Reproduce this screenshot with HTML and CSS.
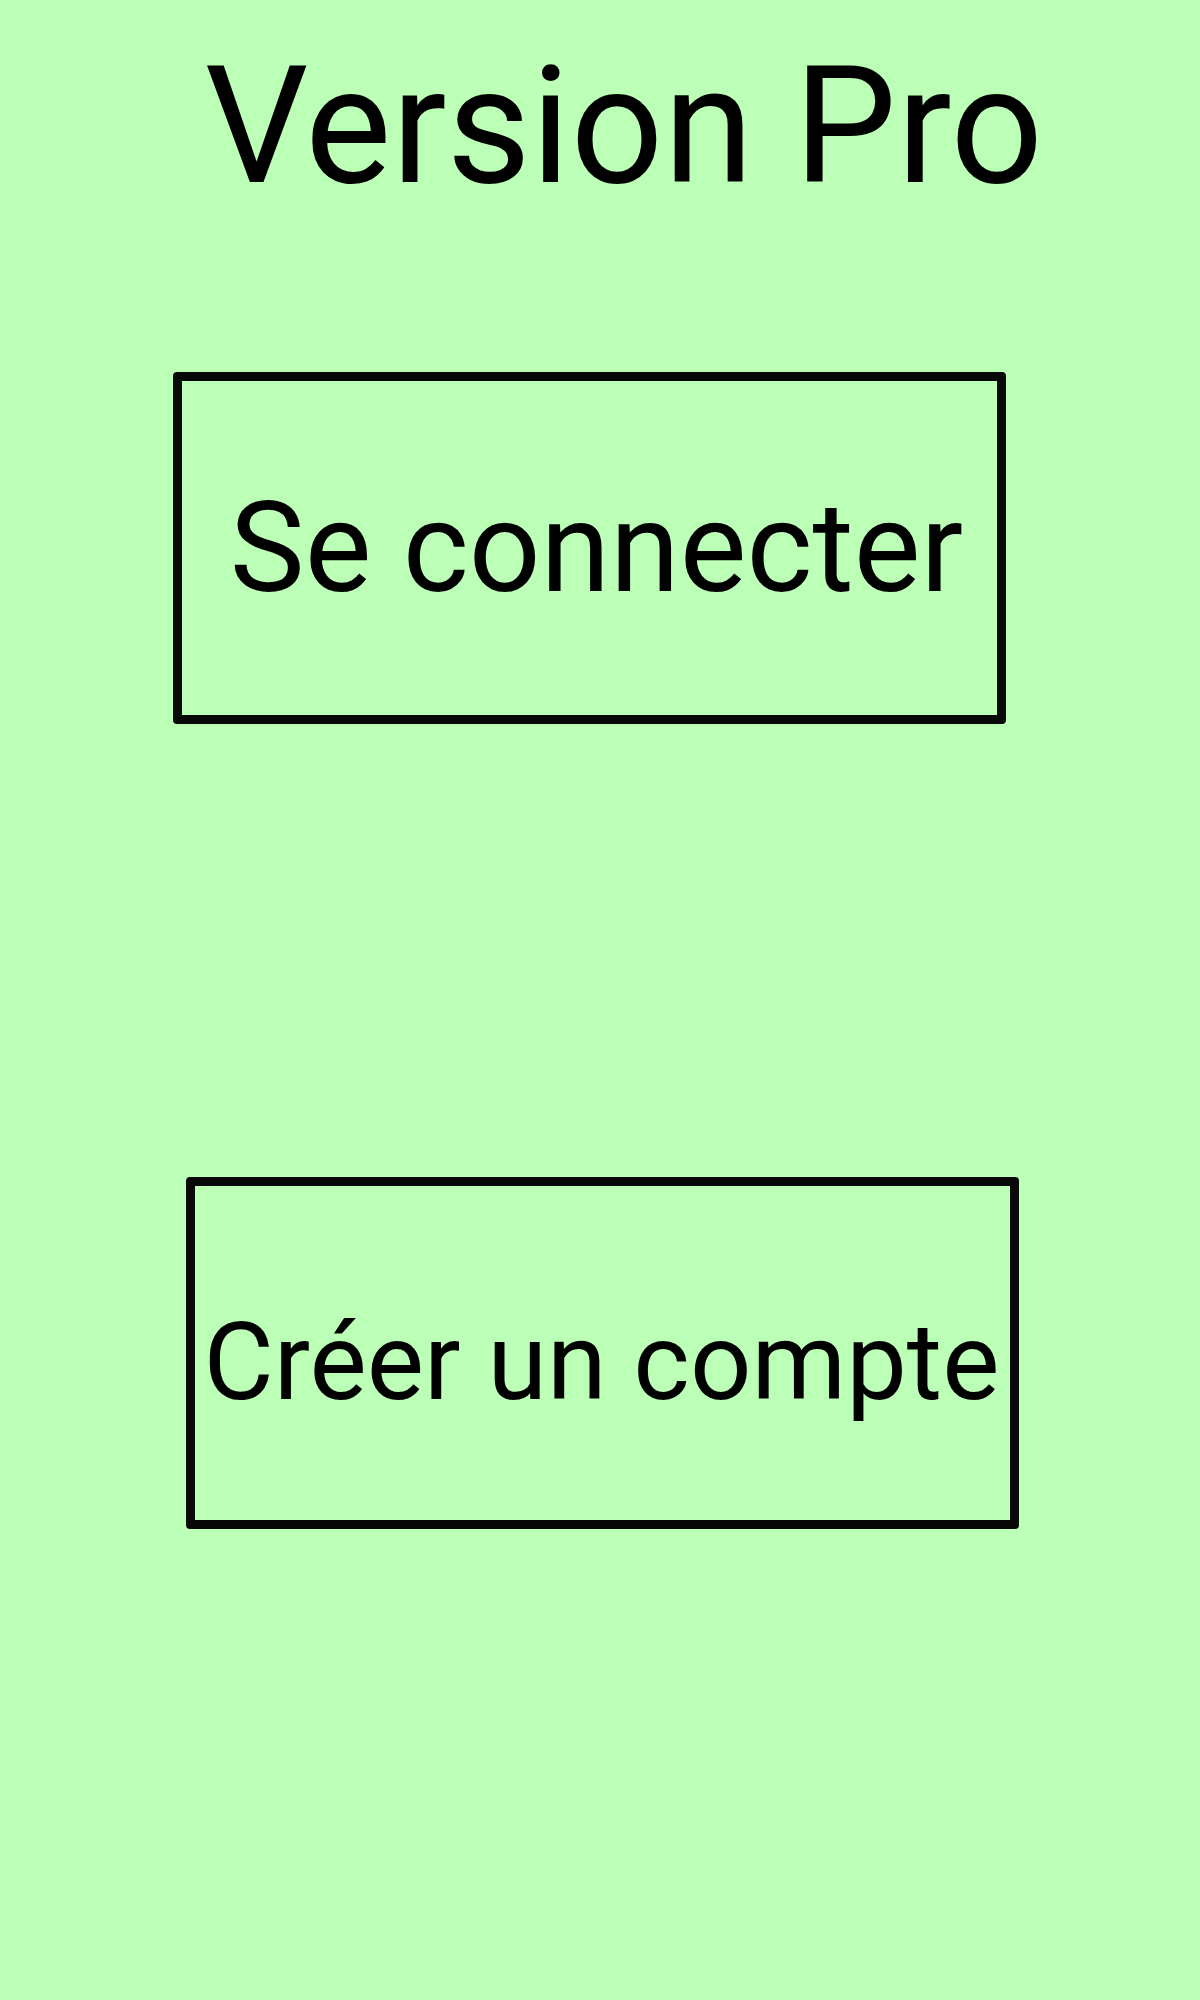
FILE: index.html
```html
<!DOCTYPE html>
<html lang="fr">
<head>
<meta charset="utf-8">
<title>Version Pro</title>
<link rel="stylesheet" href="styles.css">
</head>
<body>
<main class="screen">
  <h1 class="title">Version Pro</h1>
  <button class="btn btn-login" type="button"><span class="btn-label">Se connecter</span></button>
  <button class="btn btn-signup" type="button"><span class="btn-label">Créer un compte</span></button>
</main>
</body>
</html>
```

FILE: styles.css
```css
html, body {
  margin: 0;
  padding: 0;
  background: #bcffb6;
}

.screen {
  width: 1200px;
  min-height: 2000px;
  display: flex;
  flex-direction: column;
  align-items: flex-start;
  font-family: Roboto, "Liberation Sans", sans-serif;
  color: #000;
}

.title {
  margin: 0;
  padding: 31px 0 0 48px;
  width: 100%;
  box-sizing: border-box;
  font-size: 163px;
  font-weight: 400;
  line-height: normal;
  text-align: center;
}

.btn {
  box-sizing: border-box;
  width: 833px;
  height: 352px;
  border: 9px solid #080808;
  border-radius: 4px;
  background: transparent;
  font-family: inherit;
  color: #000;
  display: flex;
  align-items: center;
  justify-content: center;
  padding: 0;
  white-space: nowrap;
}

.btn-login {
  margin: 150px 0 0 173px;
  font-size: 126px;
  padding-left: 14px;
}

.btn-signup {
  margin: 453px 0 0 186px;
  font-size: 108px;
  padding-top: 18px;
  padding-right: 2px;
}

.btn-label {
  line-height: normal;
}
```
